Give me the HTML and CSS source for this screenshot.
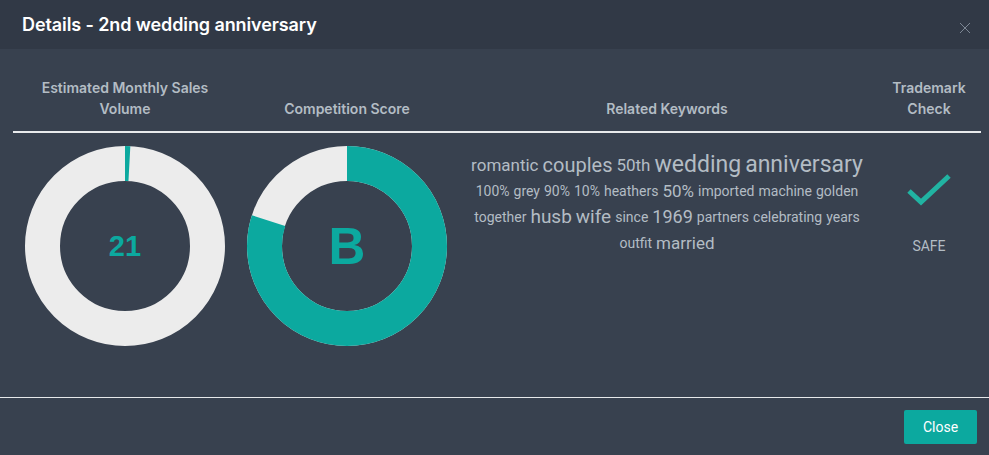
FILE: index.html
```html
<!DOCTYPE html>
<html lang="en">
    <head>
        <meta charset="UTF-8">
        <title>Details - 2nd wedding anniversary</title>
        <link rel="stylesheet" href="styles.css">
    </head>
    <body>
        <div class="modal">
            <div class="modal-header">
                <h3>Details - 2nd wedding anniversary</h3>
                <button class="close-x" aria-label="close">
                    <svg width="12" height="12" viewBox="0 0 12 12">
                        <path d="M1 1 L6 6 L11 1 M1 11 L6 6 L11 11" stroke="#7d8794" stroke-width="1" fill="none"/>
                    </svg>
                </button>
            </div>
            <div class="modal-body">
                <div class="grid">
                    <div class="th">Estimated Monthly Sales<br>Volume</div>
                    <div class="th">Competition Score</div>
                    <div class="th">Related Keywords</div>
                    <div class="th">Trademark<br>Check</div>

                    <div class="td">
                        <div class="donut">
                            <svg width="200" height="200" viewBox="0 0 200 200">
                                <circle cx="100" cy="100" r="82.5" stroke="#ececec" stroke-width="35" fill="none"/>
                                <circle cx="100" cy="100" r="82.5" stroke="#0ca99f" stroke-width="35" fill="none"
                                        stroke-dasharray="4.5 600" transform="rotate(-90 100 100)"/>
                            </svg>
                            <span class="donut-value small">21</span>
                        </div>
                    </div>
                    <div class="td">
                        <div class="donut">
                            <svg width="200" height="200" viewBox="0 0 200 200">
                                <circle cx="100" cy="100" r="82.5" stroke="#ececec" stroke-width="35" fill="none"/>
                                <circle cx="100" cy="100" r="82.5" stroke="#0ca99f" stroke-width="35" fill="none"
                                        stroke-dasharray="414 600" transform="rotate(-90 100 100)"/>
                            </svg>
                            <span class="donut-value">B</span>
                        </div>
                    </div>
                    <div class="td keywords">
                        <span class="k17">romantic</span>
                        <span class="k20">couples</span>
                        <span class="k17">50th</span>
                        <span class="k23">wedding</span>
                        <span class="k23">anniversary</span>
                        <span class="k14">100%</span>
                        <span class="k14">grey</span>
                        <span class="k14">90%</span>
                        <span class="k14">10%</span>
                        <span class="k14">heathers</span>
                        <span class="k17">50%</span>
                        <span class="k14">imported</span>
                        <span class="k14">machine</span>
                        <span class="k14">golden</span>
                        <span class="k14">together</span>
                        <span class="k19">husb</span>
                        <span class="k19">wife</span>
                        <span class="k14">since</span>
                        <span class="k18">1969</span>
                        <span class="k14">partners</span>
                        <span class="k14">celebrating</span>
                        <span class="k14">years</span>
                        <span class="k14">outfit</span>
                        <span class="k17">married</span>
                    </div>
                    <div class="td trademark">
                        <svg width="46" height="34" viewBox="0 0 46 34">
                            <path d="M3 19 L15 30 L43 4" stroke="#21b3a2" stroke-width="5" fill="none"/>
                        </svg>
                        <span class="safe">SAFE</span>
                    </div>
                </div>
            </div>
            <div class="modal-footer">
                <button class="btn-close">Close</button>
            </div>
        </div>
    </body>
</html>
```
FILE: styles.css
```css
body {
    margin: 0;
    padding: 0;
    background-color: #38414f;
    font-family: Inter, 'Noto Sans', sans-serif;
}
.modal {
    width: 989px;
    height: 455px;
    display: flex;
    flex-direction: column;
}
.modal-header {
    height: 49px;
    background-color: #313946;
    display: flex;
    align-items: center;
    justify-content: space-between;
    padding: 0 18px 0 22px;
    box-sizing: border-box;
}
.modal-header h3 {
    margin: 0;
    color: #ffffff;
    font-size: 18px;
    font-weight: 600;
    letter-spacing: -0.1px;
}
.close-x {
    background: none;
    border: none;
    padding: 0;
    margin-top: 6px;
    display: flex;
}
.modal-body {
    flex-grow: 1;
    padding: 28px 8px 0 13px;
    border-bottom: 1px solid #e6e8ea;
}
.grid {
    display: grid;
    grid-template-columns: 224px 220px 420px 104px;
}
.th {
    color: #b3bcc4;
    font-size: 14px;
    font-weight: 600;
    line-height: 21px;
    text-align: center;
    align-self: end;
    padding-bottom: 12px;
    border-bottom: 2px solid #e8eaec;
}
.td {
    padding-top: 13px;
    display: flex;
    justify-content: center;
}
.donut {
    position: relative;
    width: 200px;
    height: 200px;
}
.donut svg {
    display: block;
}
.donut-value {
    position: absolute;
    inset: 0;
    display: flex;
    align-items: center;
    justify-content: center;
    color: #0ca99f;
    font-family: 'Liberation Sans', Arial, sans-serif;
    font-weight: bold;
    font-size: 51px;
}
.donut-value.small {
    font-size: 29px;
}
.keywords {
    flex-wrap: wrap;
    align-content: flex-start;
    justify-content: center;
    column-gap: 4px;
    padding: 19px 8px 0;
    font-family: Roboto, sans-serif;
    color: #b3bcc4;
    line-height: 26px;
}
.k14 { font-size: 14px; }
.k17 { font-size: 17px; }
.k18 { font-size: 18px; }
.k19 { font-size: 19px; }
.k20 { font-size: 20px; }
.k23 { font-size: 23px; }
.trademark {
    flex-direction: column;
    justify-content: flex-start;
    align-items: center;
    padding-top: 39px;
}
.trademark svg {
    display: block;
}
.safe {
    margin-top: 32px;
    color: #b3bcc4;
    font-family: Roboto, sans-serif;
    font-size: 14px;
}
.modal-footer {
    height: 57px;
    display: flex;
    justify-content: flex-end;
    align-items: center;
    padding-right: 12px;
}
.btn-close {
    background-color: #0ca99f;
    color: #ffffff;
    border: none;
    border-radius: 2px;
    width: 73px;
    height: 34px;
    font-family: Roboto, sans-serif;
    font-size: 14px;
    cursor: pointer;
}
```
